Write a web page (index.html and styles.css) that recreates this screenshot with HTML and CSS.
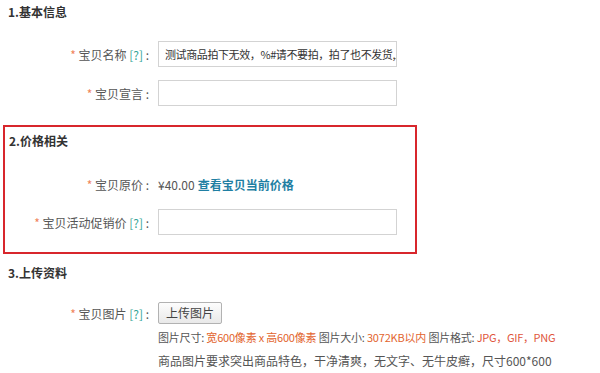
FILE: index.html
```html
<!DOCTYPE html>
<html lang="zh-CN">
<head>
<meta charset="utf-8">
<title>宝贝信息</title>
<link rel="stylesheet" href="styles.css">
</head>
<body>
<div class="page">
  <div class="title t1">1.基本信息</div>
  <div class="row r1">
    <div class="label"><span class="req">*</span> 宝贝名称 <span class="q">[?]</span> :</div>
    <div class="field"><div class="input">测试商品拍下无效，%#请不要拍，拍了也不发货,上</div></div>
  </div>
  <div class="row r2">
    <div class="label"><span class="req">*</span> 宝贝宣言 :</div>
    <div class="field"><div class="input"></div></div>
  </div>

  <div class="box">
    <div class="title t2">2.价格相关</div>
    <div class="row r3">
      <div class="label"><span class="req">*</span> 宝贝原价 :</div>
      <div class="field"><span class="price">¥40.00</span> <a class="link">查看宝贝当前价格</a></div>
    </div>
    <div class="row r4">
      <div class="label"><span class="req">*</span> 宝贝活动促销价 <span class="q">[?]</span> :</div>
      <div class="field"><div class="input"></div></div>
    </div>
  </div>

  <div class="title t3">3.上传资料</div>
  <div class="row r5">
    <div class="label"><span class="req">*</span> 宝贝图片 <span class="q">[?]</span> :</div>
    <div class="field"><button class="btn">上传图片</button></div>
  </div>
  <div class="info">
    <div class="line l1">图片尺寸: <span class="hl">宽600像素 x 高600像素</span> 图片大小: <span class="hl">3072KB以内</span> 图片格式: <span class="hl2">JPG，GIF，PNG</span></div>
    <div class="line">商品图片要求突出商品特色，干净清爽，无文字、无牛皮癣，尺寸600*600</div>
  </div>
</div>
</body>
</html>
```

FILE: styles.css
```css
html, body {
  margin: 0;
  padding: 0;
  background: #fff;
}
body {
  font-family: "Noto Sans CJK SC", "Noto Sans", sans-serif;
  font-size: 12px;
  color: #555;
}
.page {
  width: 600px;
  height: 373px;
  overflow: hidden;
}
.title {
  font-weight: 700;
  color: #333;
  padding-left: 8px;
  height: 24px;
  line-height: 24px;
}
.t2 {
  padding-left: 4px;
  height: 28px;
  line-height: 28px;
}
.t3 {
  margin-top: 7px;
}
.row {
  display: flex;
  align-items: center;
  height: 26px;
}
.label {
  width: 158px;
  box-sizing: border-box;
  padding-right: 9px;
  text-align: right;
  white-space: nowrap;
  color: #555;
}
.box .label {
  width: 153px;
}
.req {
  color: #f0845a;
}
.q {
  color: #36a596;
}
.field {
  display: flex;
  align-items: center;
}
.input {
  width: 239px;
  height: 26px;
  box-sizing: border-box;
  border: 1px solid #d3d3d3;
  padding: 0 6px;
  line-height: 24px;
  font-size: 11px;
  letter-spacing: -0.4px;
  color: #333;
  white-space: nowrap;
  overflow: hidden;
  background: #fff;
}
.r1 { margin-top: 17px; }
.r2 { margin-top: 13px; }
.box {
  margin: 19px 0 0 3px;
  width: 414px;
  box-sizing: border-box;
  border: 2px solid #d8262c;
  padding-bottom: 17px;
}
.r3 { margin-top: 16px; }
.r4 { margin-top: 12px; }
.price { color: #555; }
.link {
  color: #1f7fa3;
  font-weight: 700;
  margin-left: 3px;
}
.r5 {
  margin-top: 17px;
  height: 22px;
}
.btn {
  width: 64px;
  height: 22px;
  border: 1px solid #b2b2b2;
  border-radius: 2px;
  background: linear-gradient(#fdfdfd, #e9e9e9);
  font-family: inherit;
  font-size: 12px;
  color: #444;
  padding: 0;
  line-height: 20px;
}
.info {
  margin-top: 2px;
  padding-left: 158px;
}
.line {
  line-height: 23px;
  white-space: nowrap;
}
.l1 {
  font-size: 11px;
  letter-spacing: -0.2px;
}
.hl { color: #e2642e; }
.hl2 { color: #e0553c; letter-spacing: -0.3px; }
```
